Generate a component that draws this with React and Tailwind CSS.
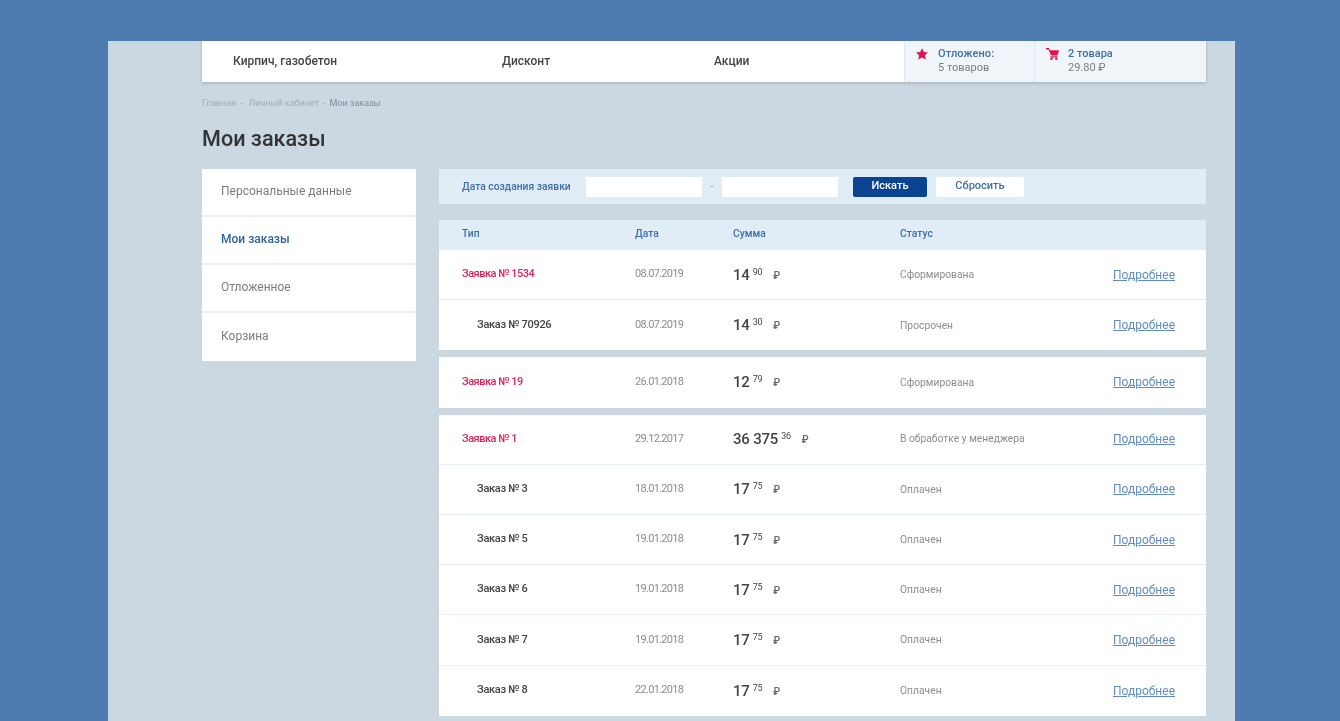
const StarIcon = () => (
  <svg className="w-[12px] h-[12px] text-[#e0134f]" viewBox="0 0 24 24" fill="currentColor">
    <path d="M12 0.5l3.6 7.6 8.4.9-6.2 5.6 1.8 8.4L12 18.8l-7.6 4.2 1.8-8.4L0 9l8.4-.9z" />
  </svg>
);

const CartIcon = () => (
  <svg className="w-[13px] h-[12px] text-[#e0134f]" viewBox="0 0 26 24" fill="currentColor">
    <path d="M0 0h6l1.5 4.5H26l-3 10.5H10L5 3H0z" />
    <rect x="9" y="16.5" width="14" height="2.5" />
    <circle cx="11" cy="21.5" r="2.5" />
    <circle cx="20.5" cy="21.5" r="2.5" />
  </svg>
);

const Row = ({ name, isOrder, date, whole, cents, status }) => (
  <div className="flex items-center h-[50.2px] pl-[23px] text-[11px]">
    <div
      className={`w-[173px] font-medium ${
        isOrder
          ? "pl-[15px] text-[#444444] tracking-[-0.3px]"
          : "text-[#e0235a] tracking-[-0.5px]"
      }`}
    >
      {name}
    </div>
    <div className="w-[98px] text-[#8d8d8d] tracking-[-0.7px]">{date}</div>
    <div className="w-[167px] flex items-start text-[#444444]">
      <span className="text-[15px] leading-[18px] font-medium tracking-[-0.2px]">{whole}</span>
      <span className="ml-[3px] text-[9px] leading-[12px] tracking-[-0.3px]">{cents}</span>
      <span className="ml-[11px] mt-[3px] text-[10px] leading-[14px] font-medium text-[#666666]">₽</span>
    </div>
    <div className="w-[213px] text-[#8d8d8d] text-[10.3px]">{status}</div>
    <a className="text-[12px] text-[#5f8cc4] underline">Подробнее</a>
  </div>
);

const Group = ({ rows }) => (
  <div className="mb-[7px] bg-white divide-y divide-[#e6edf4]">
    {rows.map((row, index) => (
      <Row key={index} {...row} />
    ))}
  </div>
);

const groups = [
  [
    { name: "Заявка № 1534", date: "08.07.2019", whole: "14", cents: "90", status: "Сформирована" },
    { name: "Заказ № 70926", isOrder: true, date: "08.07.2019", whole: "14", cents: "30", status: "Просрочен" },
  ],
  [{ name: "Заявка № 19", date: "26.01.2018", whole: "12", cents: "79", status: "Сформирована" }],
  [
    { name: "Заявка № 1", date: "29.12.2017", whole: "36 375", cents: "36", status: "В обработке у менеджера" },
    { name: "Заказ № 3", isOrder: true, date: "18.01.2018", whole: "17", cents: "75", status: "Оплачен" },
    { name: "Заказ № 5", isOrder: true, date: "19.01.2018", whole: "17", cents: "75", status: "Оплачен" },
    { name: "Заказ № 6", isOrder: true, date: "19.01.2018", whole: "17", cents: "75", status: "Оплачен" },
    { name: "Заказ № 7", isOrder: true, date: "19.01.2018", whole: "17", cents: "75", status: "Оплачен" },
    { name: "Заказ № 8", isOrder: true, date: "22.01.2018", whole: "17", cents: "75", status: "Оплачен" },
  ],
];

const menu = ["Персональные данные", "Мои заказы", "Отложенное", "Корзина"];

const App = () => {
  return (
    <div className="h-[721px] overflow-hidden bg-[#4f7cb0] pt-[41px] pl-[108px] pr-[105px] font-['Roboto','Noto_Sans',sans-serif] blur-[0.6px]">
      <div className="h-[700px] bg-[#cbd7e1] pl-[94px] pr-[29px]">
        {/* Top bar */}
        <div className="flex h-[41px] bg-white shadow-[0_1px_3px_rgba(60,80,110,0.3)]">
          <div className="flex flex-1 items-center pb-[2px] text-[12px] font-medium text-[#444444]">
            <span className="ml-[31px] w-[269px]">Кирпич, газобетон</span>
            <span className="w-[212px]">Дисконт</span>
            <span>Акции</span>
          </div>
          <div className="flex w-[130px] gap-[10px] pl-[11px] pt-[6px] bg-[#f0f5fa] border-l border-[#dfe7ef] text-[11px] leading-[14px]">
            <div className="pt-[1px]"><StarIcon /></div>
            <div>
              <p className="font-medium text-[#3f6fa8] tracking-[0.1px]">Отложено:</p>
              <p className="text-[#7d7d7d]">5 товаров</p>
            </div>
          </div>
          <div className="flex w-[172px] gap-[9px] pl-[11px] pt-[6px] bg-[#f0f5fa] border-l border-[#dfe7ef] text-[11px] leading-[14px]">
            <div className="pt-[1px]"><CartIcon /></div>
            <div>
              <p className="font-medium text-[#3f6fa8]">2 товара</p>
              <p className="text-[#7d7d7d]">29.80 ₽</p>
            </div>
          </div>
        </div>

        {/* Breadcrumbs */}
        <div className="mt-[14px] flex gap-[4px] text-[9px] leading-[14px] text-[#9fb0bf]">
          <span>Главная</span>
          <span>-</span>
          <span className="ml-[2px]">Личный кабинет</span>
          <span>-</span>
          <span className="text-[#7c8fa1]">Мои заказы</span>
        </div>

        <h1 className="mt-[13px] mb-[14px] text-[21.6px] leading-[32px] font-medium text-[#333333]">
          Мои заказы
        </h1>

        <div className="flex gap-[23px] items-start">
          {/* Sidebar */}
          <div className="w-[214px] bg-white divide-y-2 divide-[#e9eff5] text-[12px]">
            {menu.map((item, index) => (
              <div
                key={item}
                className={`flex items-center h-[48px] pb-[3px] pl-[19px] ${
                  index === 1 ? "font-medium text-[#2f62a3]" : "text-[#7d7d7d]"
                }`}
              >
                {item}
              </div>
            ))}
          </div>

          <div className="w-[767px]">
            {/* Filter */}
            <div className="flex items-center h-[35px] mb-[16px] pl-[23px] bg-[#e0ecf6] text-[10.3px] font-medium text-[#3f6fa8]">
              <span className="w-[124px]">Дата создания заявки</span>
              <div className="w-[116px] h-[20px] bg-white" />
              <span className="w-[20px] text-center font-normal text-[#8d9db0]">-</span>
              <div className="w-[116px] h-[20px] bg-white" />
              <button className="ml-[15px] w-[74px] h-[20px] rounded-[2px] bg-[#0a4490] text-white text-[11px]">
                Искать
              </button>
              <button className="ml-[9px] w-[88px] h-[20px] rounded-[2px] bg-white text-[#3f6fa8] text-[11px]">
                Сбросить
              </button>
            </div>

            {/* Table */}
            <div className="flex items-center h-[30px] pb-[2px] pl-[23px] bg-[#e0ecf6] text-[10.3px] font-medium text-[#3f6fa8]">
              <div className="w-[173px]">Тип</div>
              <div className="w-[98px]">Дата</div>
              <div className="w-[167px]">Сумма</div>
              <div>Статус</div>
            </div>
            {groups.map((rows, index) => (
              <Group key={index} rows={rows} />
            ))}
            <div className="h-[10px] bg-white" />
          </div>
        </div>
      </div>
    </div>
  );
};

export default App;
